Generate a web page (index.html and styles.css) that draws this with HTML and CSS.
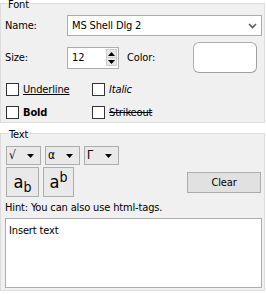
FILE: index.html
```html
<!DOCTYPE html>
<html lang="en">

<head>
    <meta charset="UTF-8" />
    <title>Text Properties</title>
    <link rel="stylesheet" href="styles.css">
</head>

<body>
    <fieldset class="group font-group">
        <legend>Font</legend>

        <div class="row name-row">
            <label class="field-label">Name:</label>
            <div class="combo">
                <span>MS Shell Dlg 2</span>
                <svg class="chevron" width="9" height="6" viewBox="0 0 9 6">
                    <path d="M1 1 L4.5 4.5 L8 1" fill="none" stroke="#606060" stroke-width="1.6" />
                </svg>
            </div>
        </div>

        <div class="row size-row">
            <label class="field-label">Size:</label>
            <div class="spin">
                <span class="spin-value">12</span>
                <div class="spin-buttons">
                    <span class="spin-up"><svg width="7" height="4" viewBox="0 0 7 4"><path d="M0 4 L3.5 0 L7 4 Z" fill="#000" /></svg></span>
                    <span class="spin-down"><svg width="7" height="4" viewBox="0 0 7 4"><path d="M0 0 L3.5 4 L7 0 Z" fill="#000" /></svg></span>
                </div>
            </div>
            <label class="color-label">Color:</label>
            <div class="color-button"></div>
        </div>

        <div class="checks">
            <label class="check"><span class="box"></span><span class="underline">Underline</span></label>
            <label class="check"><span class="box"></span><span class="italic">Italic</span></label>
            <label class="check"><span class="box"></span><span class="bold">Bold</span></label>
            <label class="check"><span class="box"></span><span class="strike">Strikeout</span></label>
        </div>
    </fieldset>

    <fieldset class="group text-group">
        <legend>Text</legend>

        <div class="tool-row">
            <div class="tool-button"><span class="sym">√</span><svg width="7" height="4" viewBox="0 0 7 4"><path d="M0 0 L3.5 4 L7 0 Z" fill="#000" /></svg></div>
            <div class="tool-button"><span class="sym">α</span><svg width="7" height="4" viewBox="0 0 7 4"><path d="M0 0 L3.5 4 L7 0 Z" fill="#000" /></svg></div>
            <div class="tool-button"><span class="sym">Γ</span><svg width="7" height="4" viewBox="0 0 7 4"><path d="M0 0 L3.5 4 L7 0 Z" fill="#000" /></svg></div>
        </div>

        <div class="script-row">
            <button class="script-button sub-button">a<span class="sub">b</span></button>
            <button class="script-button sup-button">a<span class="sup">b</span></button>
            <button class="clear-button">Clear</button>
        </div>

        <div class="hint">Hint: You can also use html-tags.</div>

        <div class="editor">Insert text</div>
    </fieldset>
</body>

</html>
```

FILE: styles.css
```css
/* Dialog page */
body {
    margin: 0;
    background: #fff;
    font-family: 'DejaVu Sans Condensed', 'Liberation Sans', sans-serif;
    font-size: 11px;
    line-height: 13px;
    letter-spacing: -0.15px;
    color: #000;
    width: 266px;
    height: 294px;
    overflow: hidden;
}

/* Group boxes */
.group {
    margin: 0 1px 0 0;
    border: 1px solid #dcdcdc;
    background: #f0f0f0;
    min-width: 0;
}

.group legend {
    padding: 3px 1px 0 1px;
    margin-left: 2px;
    line-height: 9px;
}

.font-group {
    margin-top: -3px;
    padding: 0 2px 3px 4px;
}

.text-group {
    margin-top: 4px;
    padding: 0 2px 2px 4px;
}

.text-group legend {
    margin-left: 3px;
}

.row {
    display: flex;
    align-items: center;
}

.field-label {
    width: 62px;
    flex: none;
}

/* Name combo */
.name-row {
    margin-top: 6px;
}

.combo {
    flex: 1;
    height: 21px;
    box-sizing: border-box;
    border: 1px solid #adadad;
    background: #fff;
    display: flex;
    align-items: center;
    justify-content: space-between;
    padding: 0 4px 0 4px;
}

.chevron {
    margin-top: 1px;
}

/* Size and colour */
.size-row {
    margin-top: 6px;
}

.spin {
    width: 52px;
    height: 22px;
    box-sizing: border-box;
    border: 1px solid #adadad;
    background: #fff;
    display: flex;
    align-items: center;
    justify-content: space-between;
    padding: 0 1px 0 4px;
}

.spin-buttons {
    width: 11px;
    height: 17px;
    display: flex;
    flex-direction: column;
    border: 1px solid #cfcfcf;
    background: #e8e8e8;
    box-sizing: border-box;
}

.spin-buttons span {
    flex: 1;
    display: flex;
    align-items: center;
    justify-content: center;
}

.spin-up {
    border-bottom: 1px solid #cfcfcf;
}

.color-label {
    margin-left: 8px;
    width: 66px;
}

.color-button {
    width: 64px;
    height: 31px;
    box-sizing: border-box;
    border: 1px solid #adadad;
    border-right-color: #a0a0a0;
    border-bottom-color: #a0a0a0;
    border-radius: 6px;
    background: #fff;
}

/* Checkboxes */
.checks {
    margin-top: 10px;
    display: grid;
    grid-template-columns: 86px 1fr;
    row-gap: 10px;
    padding-left: 1px;
}

.check {
    display: flex;
    align-items: center;
    gap: 4px;
}

.box {
    width: 13px;
    height: 13px;
    box-sizing: border-box;
    border: 1px solid #333;
    background: #fff;
}

.underline {
    text-decoration: underline;
}

.italic {
    font-style: italic;
}

.bold {
    font-weight: bold;
}

.strike {
    text-decoration: line-through;
}

/* Text group tools */
.tool-row {
    margin-top: 7px;
    padding-left: 1px;
    display: flex;
    gap: 4px;
}

.tool-button {
    width: 35px;
    height: 19px;
    box-sizing: border-box;
    border: 1px solid #adadad;
    background: #e9e9e9;
    display: flex;
    align-items: center;
    justify-content: space-between;
    padding: 0 6px 0 2px;
}

.sym {
    font-size: 12px;
}

.script-row {
    margin-top: 2px;
    padding-left: 1px;
    display: flex;
    align-items: center;
    gap: 4px;
}

.script-button {
    height: 30px;
    box-sizing: border-box;
    border: 1px solid #adadad;
    background: #e9e9e9;
    font-family: inherit;
    font-size: 18px;
    line-height: 18px;
    padding: 0;
    color: #000;
}

.sub-button {
    width: 33px;
}

.sup-button {
    width: 31px;
}

.sub,
.sup {
    font-size: 14px;
    position: relative;
}

.sub {
    top: 4px;
}

.sup {
    top: -6px;
}

.clear-button {
    margin-left: auto;
    margin-right: 1px;
    width: 74px;
    height: 21px;
    box-sizing: border-box;
    border: 1px solid #adadad;
    background: #e1e1e1;
    font-family: inherit;
    font-size: 11px;
    letter-spacing: -0.15px;
    color: #000;
    padding: 0;
}

.hint {
    margin-top: 4px;
}

.editor {
    margin-top: 4px;
    height: 70px;
    box-sizing: border-box;
    border: 1px solid #adadad;
    background: #fff;
    padding: 5px 3px;
}
```
